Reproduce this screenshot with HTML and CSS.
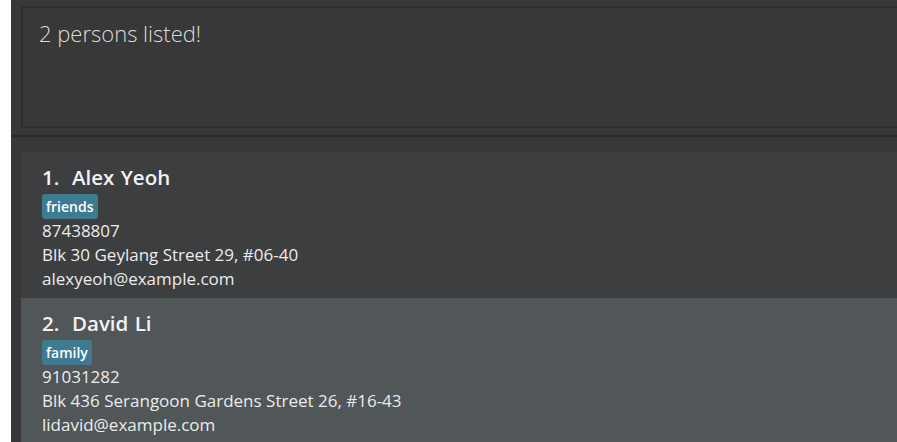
FILE: index.html
```html
<!DOCTYPE html>
<html>
<head>
<meta charset="utf-8">
<link rel="stylesheet" href="styles.css">
</head>
<body>
<div class="app">
  <div class="result-pane">
    <div class="result-box">2 persons listed!</div>
  </div>
  <div class="divider"></div>
  <div class="list-pane">
    <div class="cell cell-odd">
      <div class="name">1.&nbsp; Alex Yeoh</div>
      <div class="tags"><span class="tag">friends</span></div>
      <div class="field">87438807</div>
      <div class="field">Blk 30 Geylang Street 29, #06-40</div>
      <div class="field">alexyeoh@example.com</div>
    </div>
    <div class="cell cell-even">
      <div class="name">2.&nbsp; David Li</div>
      <div class="tags"><span class="tag">family</span></div>
      <div class="field">91031282</div>
      <div class="field">Blk 436 Serangoon Gardens Street 26, #16-43</div>
      <div class="field">lidavid@example.com</div>
    </div>
  </div>
</div>
</body>
</html>
```

FILE: styles.css
```css
html, body {
  margin: 0;
  padding: 0;
  background: #ffffff;
  overflow: hidden;
  height: 100%;
}
.app {
  margin-left: 11px;
  height: 100%;
  background: #383838;
  font-family: "Open Sans", "Noto Sans", sans-serif;
}
.result-pane {
  padding: 6px 0 7px 10px;
}
.result-box {
  height: 122px;
  box-sizing: border-box;
  margin-right: -20px;
  border: 2px solid #2e2e2e;
  background: #383838;
  color: #dcdcdc;
  font-weight: 300;
  font-size: 22px;
  line-height: 30px;
  padding: 10px 16px;
}
.divider {
  height: 2px;
  background: #2b2b2b;
}
.list-pane {
  padding: 15px 0 0 10px;
}
.cell {
  padding: 11px 21px 0 21px;
  box-sizing: border-box;
  color: #ececec;
}
.cell-odd {
  background: #3c3e3f;
  height: 146px;
}
.cell-even {
  background: #515658;
  height: 160px;
}
.name {
  font-weight: 600;
  font-size: 20.5px;
  line-height: 28px;
  color: #f2f2f2;
  word-spacing: 1px;
}
.tags {
  margin-top: 3px;
  height: 25px;
  display: flex;
}
.tag {
  background: #3e7b91;
  color: #ffffff;
  font-size: 14px;
  font-weight: 600;
  line-height: 25px;
  padding: 0 4px;
  border-radius: 3px;
}
.field {
  font-size: 17px;
  line-height: 24px;
}
```
